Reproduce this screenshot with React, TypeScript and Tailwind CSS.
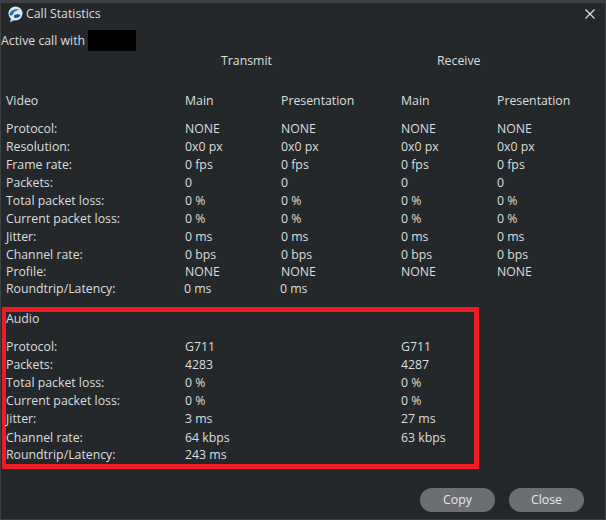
import React from 'react';

const videoRows = [
  { label: 'Protocol:', vals: ['NONE', 'NONE', 'NONE', 'NONE'], h: 'h-[18px]' },
  { label: 'Resolution:', vals: ['0x0 px', '0x0 px', '0x0 px', '0x0 px'], h: 'h-[18px]' },
  { label: 'Frame rate:', vals: ['0 fps', '0 fps', '0 fps', '0 fps'], h: 'h-[18px]' },
  { label: 'Packets:', vals: ['0', '0', '0', '0'], h: 'h-[18px]' },
  { label: 'Total packet loss:', vals: ['0 %', '0 %', '0 %', '0 %'], h: 'h-[18px]' },
  { label: 'Current packet loss:', vals: ['0 %', '0 %', '0 %', '0 %'], h: 'h-[18px]' },
  { label: 'Jitter:', vals: ['0 ms', '0 ms', '0 ms', '0 ms'], h: 'h-[18px]' },
  { label: 'Channel rate:', vals: ['0 bps', '0 bps', '0 bps', '0 bps'], h: 'h-[17px]' },
  { label: 'Profile:', vals: ['NONE', 'NONE', 'NONE', 'NONE'], h: 'h-[17px]' },
];

const audioRows = [
  { label: 'Protocol:', tx: 'G711', rx: 'G711', h: 'h-[18px]' },
  { label: 'Packets:', tx: '4283', rx: '4287', h: 'h-[18px]' },
  { label: 'Total packet loss:', tx: '0 %', rx: '0 %', h: 'h-[18px]' },
  { label: 'Current packet loss:', tx: '0 %', rx: '0 %', h: 'h-[18px]' },
  { label: 'Jitter:', tx: '3 ms', rx: '27 ms', h: 'h-[19px]' },
  { label: 'Channel rate:', tx: '64 kbps', rx: '63 kbps', h: 'h-[17px]' },
  { label: 'Roundtrip/Latency:', tx: '243 ms', rx: '', h: 'h-[18px]' },
];

const videoCols = 'grid grid-cols-[179px_96px_120px_96px_90px] pl-[5px]';

const App: React.FC = () => {
  return (
    <div className="w-[606px] h-[520px] bg-[#24282b] border-x border-b border-t-[3px] border-[#3d4144] text-[#dcdedf] text-[12.3px] leading-[18px] flex flex-col overflow-hidden" style={{ fontFamily: '"Open Sans", "Noto Sans", sans-serif' }}>
      <div className="flex items-center h-[22px] pl-[7px] pr-[10px]">
        <svg width="15" height="16" viewBox="0 0 15 16" className="mr-[3px]">
          <circle cx="7.5" cy="7.500" r="7" fill="#dbe9f5" />
          <path d="M3 13l-1 3 4-1.500z" fill="#dbe9f5" />
          <path d="M1.500 8.500C2 4.500 7 2 12 4 8.500 4 5.500 5.500 5 8.500 4 10 2 10 1.500 8.500Z" fill="#2a6fb5" />
          <path d="M6 9.500c2-1.500 5-1.500 6.500-.5-1 2.500-4.500 3.500-6.500 2.500Z" fill="#1d4f8a" />
        </svg>
        <span className="flex-1">Call Statistics</span>
        <svg width="10" height="10" viewBox="0 0 10 10" stroke="#e4e6e7" strokeWidth="1.1" fill="none">
          <path d="M.5.5l9 9M9.500.5l-9 9" />
        </svg>
      </div>

      <div className="flex items-center h-[21px] mt-[5px]">
        <span className="w-[87px]">Active call with</span>
        <div className="w-[48px] h-[21px] bg-black" />
      </div>

      <div className="flex h-[18px] mt-px">
        <div className="w-[220px]" />
        <div className="w-[216px]">Transmit</div>
        <div>Receive</div>
      </div>

      <div className={`${videoCols} mt-[22px]`}>
        <div>Video</div>
        <div>Main</div>
        <div>Presentation</div>
        <div>Main</div>
        <div>Presentation</div>
      </div>

      <div className="mt-[10px] flex flex-col">
        {videoRows.map((r) => (
          <div key={r.label} className={`${videoCols} ${r.h}`}>
            <div>{r.label}</div>
            {r.vals.map((v, i) => (
              <div key={i}>{v}</div>
            ))}
          </div>
        ))}
        <div className="grid grid-cols-[178px_96px_120px] pl-[5px] h-[17px]">
          <div>Roundtrip/Latency:</div>
          <div>0 ms</div>
          <div>0 ms</div>
        </div>
      </div>

      <div className="w-[477px] h-[162px] border-[5px] border-l-4 border-[#ee1c25] mt-[10px] ml-px flex flex-col">
        <div className="mt-[-2px]">Audio</div>
        <div className="mt-[10px] flex flex-col">
          {audioRows.map((r) => (
            <div key={r.label} className={`grid grid-cols-[179px_216px_70px] ${r.h}`}>
              <div>{r.label}</div>
              <div>{r.tx}</div>
              <div>{r.rx}</div>
            </div>
          ))}
        </div>
      </div>

      <div className="flex justify-end gap-[14px] pr-[21px] mt-[19px]">
        <button className="w-[75px] h-[24px] rounded-full bg-[#6b6f72] text-[#e8e9ea]">Copy</button>
        <button className="w-[75px] h-[24px] rounded-full bg-[#6b6f72] text-[#e8e9ea]">Close</button>
      </div>
    </div>
  );
};

export default App;
